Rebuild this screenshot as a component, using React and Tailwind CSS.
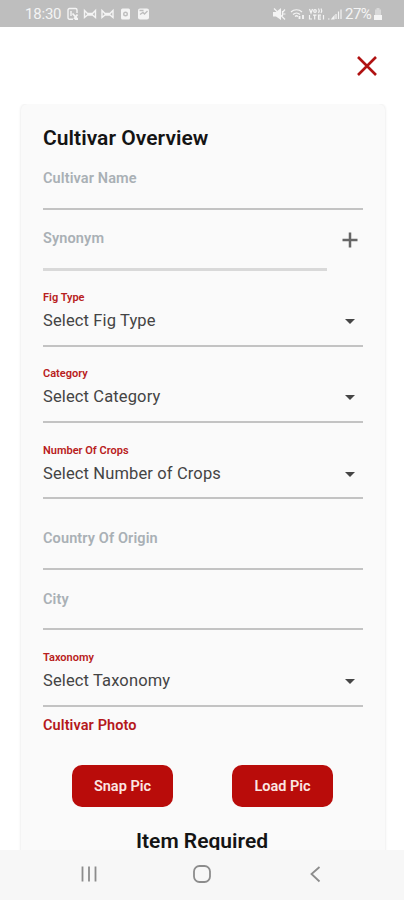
import React from 'react';

const StatusBar = () => (
  <div className="flex h-[27px] shrink-0 items-center justify-between bg-[#bebebe] pr-[22px] pl-[25px] text-[#f4f4f4]">
    <div className="flex items-center">
      <span className="w-[42px] text-[15px] leading-[26px] tracking-[-0.2px] whitespace-nowrap">18:30</span>
      <svg className="h-[14px] w-[83px]" viewBox="0 0 83 14" fill="none" stroke="currentColor" strokeWidth="1.4">
        <path d="M6 12.3H2.5A1.5 1.5 0 0 1 1 10.8V3a1.500 1.500 0 0 1 1.500-1.500h6A1.500 1.500 0 0 1 10 3v3M4 4v5" />
        <path d="M5.500 6.500l5 5.500M10.500 7.500L7 12M8 12h3" strokeWidth="1.800" />
        <path d="M17.500 3.500v7l3-2.500h5l3 2.500v-7l-3 3h-5zM20.500 6.500l5 1.500" />
        <path d="M35 3.500v7L38 8h5l3 2.500v-7l-3 3h-5zM38 6.500l5 1.500" />
        <rect x="54" y="1.500" width="9" height="11" rx="1.500" fill="currentColor" stroke="none" />
        <circle cx="58.500" cy="7" r="1.800" stroke="#bebebe" />
        <rect x="71" y="1.500" width="11" height="11" rx="2" fill="currentColor" stroke="none" />
        <path d="M73 7.500l3-2 1.500 1.500 3-3M72.500 3.500h4" stroke="#bebebe" />
      </svg>
    </div>
    <div className="flex items-center">
      <svg className="h-[14px] w-[71px]" viewBox="0 0 71 14" fill="none" stroke="currentColor" strokeWidth="1.200">
        <path d="M1 5h3l5-4v12L4 9.500H1z" fill="currentColor" stroke="none" />
        <path d="M2 1.500l11 11M10.500 5.500L13 2.500M11 7h2.500M10.500 4v5" />
        <path d="M19 5c3-3 8-3 11 0M21 7.500c2-2 5-2 7 0M23 9.500c1-1 2-1 3 0" />
        <path d="M27.500 12V9M31 12V8" strokeWidth="1.800" />
        <path d="M56 12h1.500M60 12h2V9.500zM64 12V7M66.500 12V4.500M69 12V2.500" />
        <path d="M37.500 2l1.500 4 1.500-4M46.500 1.500c1 1.500 1 3 0 4.500M49 1.500c1 1.500 1 3 0 4.500M37.500 8v4h2.500M41 8.200h3.500M42.700 8v4.500M49 8.200h-2.500v3.900H49M46.500 10h2.500M51.500 8v4.500" />
        <circle cx="43" cy="4" r="1.300" />
      </svg>
      <span className="ml-[2px] w-[29px] text-[15px] leading-[26px] tracking-[-0.5px] whitespace-nowrap">27%</span>
      <svg className="h-[12px] w-[8px]" viewBox="0 0 8 12">
        <path d="M2.500 0h3v1.500H7V8H1V1.500h1.500z" fill="#d8d8d8" />
        <path d="M0 7h8v5H0z" fill="currentColor" />
      </svg>
    </div>
  </div>
);

const TextField = ({ label, className }) => (
  <div className={`border-b-2 border-[#c3c3c3] text-[14.5px] leading-[20px] font-semibold tracking-[0.12px] text-[#a9b0b5] ${className}`}>
    <span>{label}</span>
  </div>
);

const SelectField = ({ label, placeholder, className }) => (
  <div className={`flex flex-col border-b-2 border-[#c3c3c3] ${className}`}>
    <span className="text-[11px] leading-[14px] font-semibold text-[#b82020]">{label}</span>
    <div className="mt-[5px] flex items-center justify-between pr-[8px]">
      <span className="text-[16.5px] leading-[22px] tracking-[0.13px] text-[#444444]">{placeholder}</span>
      <svg className="h-[5px] w-[10px]" viewBox="0 0 10 5">
        <path d="M0 0h10L5 5z" fill="#454545" />
      </svg>
    </div>
  </div>
);

const Button = ({ children }) => (
  <button className="h-[42px] w-[101px] rounded-[10px] bg-[#b90c0a] pt-px text-[14.5px] font-semibold text-[#fbe6e2]">
    {children}
  </button>
);

const NavBar = () => (
  <div className="flex h-[50px] shrink-0 items-start justify-between bg-[#f7f7f7] px-[80px] pt-[15px] text-[#8c8c8c]">
    <svg className="h-[18px] w-[18px]" viewBox="0 0 18 18" stroke="currentColor" strokeWidth="1.800">
      <path d="M2.500 1.500v15M9 1.500v15M15.500 1.500v15" />
    </svg>
    <svg className="h-[18px] w-[18px]" viewBox="0 0 18 18" fill="none" stroke="currentColor" strokeWidth="1.800">
      <rect x="1" y="1" width="16" height="16" rx="5.500" />
    </svg>
    <svg className="h-[18px] w-[18px]" viewBox="0 0 18 18" fill="none" stroke="currentColor" strokeWidth="1.800">
      <path d="M13.500 2L5.500 9l8 7.500" />
    </svg>
  </div>
);

const App = () => {
  return (
    <div className="flex h-[900px] w-[404px] flex-col overflow-hidden bg-white font-[Roboto,sans-serif]">
      <StatusBar />
      <div className="flex h-[77px] shrink-0 items-center justify-end pr-[27px]">
        <svg className="h-[20px] w-[20px]" viewBox="0 0 20 20" stroke="#b01212" strokeWidth="2.600">
          <path d="M1 1l18 18M19 1L1 19" />
        </svg>
      </div>
      <div className="min-h-0 flex-1 overflow-hidden pr-[19px] pl-[21px]">
        <div className="flex h-[800px] flex-col rounded-[6px] bg-[#fafafa] px-[22px] pt-[21px] shadow-[0_0_3px_rgba(0,0,0,0.12)]">
          <h1 className="h-[26px] text-[21px] leading-[26px] font-semibold tracking-[0.05px] text-[#141414]">Cultivar Overview</h1>
          <TextField label="Cultivar Name" className="h-[59px] pt-[18px]" />
          <div className="flex h-[61px] justify-between">
            <div className="w-[284px] border-b-[3px] border-[#d9d9d9] pt-[19px] text-[14.5px] leading-[20px] font-semibold tracking-[0.12px] text-[#a9b0b5]">
              Synonym
            </div>
            <svg className="mt-[22px] mr-[5px] h-[16px] w-[16px]" viewBox="0 0 16 16" stroke="#666666" strokeWidth="2.500">
              <path d="M8 0.500v15M0.500 8h15" />
            </svg>
          </div>
          <SelectField label="Fig Type" placeholder="Select Fig Type" className="h-[76px] pt-[20px]" />
          <SelectField label="Category" placeholder="Select Category" className="h-[76px] pt-[20px]" />
          <SelectField label="Number Of Crops" placeholder="Select Number of Crops" className="h-[76px] pt-[21px]" />
          <TextField label="Country Of Origin" className="h-[71px] pt-[30px]" />
          <TextField label="City" className="h-[60px] pt-[20px]" />
          <SelectField label="Taxonomy" placeholder="Select Taxonomy" className="h-[77px] pt-[21px]" />
          <p className="mt-[9px] text-[14.5px] leading-[20px] font-semibold tracking-[0.1px] text-[#b5181b]">Cultivar Photo</p>
          <div className="mt-[29px] flex justify-between pr-[30px] pl-[29px]">
            <Button>Snap Pic</Button>
            <Button>Load Pic</Button>
          </div>
          <h2 className="mt-[21px] mr-[2px] text-center text-[21px] leading-[26px] font-semibold text-[#141414]">Item Required</h2>
        </div>
      </div>
      <NavBar />
    </div>
  );
};

export default App;
